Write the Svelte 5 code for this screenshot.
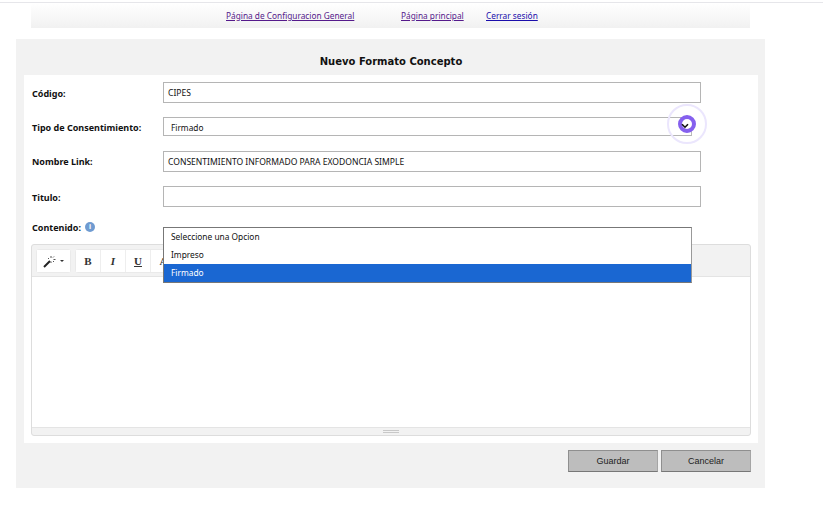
<script>
  const fields = [
    { label: 'Código:', value: 'CIPES' },
    { label: 'Tipo de Consentimiento:', value: 'Firmado', select: true },
    { label: 'Nombre Link:', value: 'CONSENTIMIENTO INFORMADO PARA EXODONCIA SIMPLE' },
    { label: 'Titulo:', value: '' }
  ];
  const options = ['Seleccione una Opcion', 'Impreso', 'Firmado'];
</script>

<div class="page">
  <nav class="topbar">
    <a class="visited first" href="#a">Página de Configuracion General</a>
    <a class="visited second" href="#b">Página principal</a>
    <a class="third" href="#c">Cerrar sesión</a>
  </nav>

  <main class="panel">
    <h1>Nuevo Formato Concepto</h1>
    <div class="inner">
      {#each fields as f}
        <div class="row">
          <span class="label">{f.label}</span>
          {#if f.select}
            <div class="box select">
              <span class="selval">{f.value}</span>
              <svg class="chev" width="8" height="6" viewBox="0 0 8 6"><path d="M1 1.2 L4 4.2 L7 1.2" fill="none" stroke="#111" stroke-width="1.6"/></svg>
              <span class="ring"></span>
            </div>
          {:else}
            <div class="box">{f.value}</div>
          {/if}
        </div>
      {/each}

      <div class="contentlabel">
        <span class="label auto">Contenido:</span>
        <span class="info">i</span>
      </div>

      <div class="editor">
        <div class="toolbar">
          <div class="group">
            <button class="tb wand">
              <svg width="13" height="13" viewBox="0 0 13 13"><path d="M1 12 L7 6" stroke="#222" stroke-width="2"/><path d="M8 1v2M8 6.5v1.5M10.5 4.500h2M5 3l1 1M11 1.500l-1 1M11 7l-1-1" stroke="#555" stroke-width="1"/></svg>
              <i class="caret"></i>
            </button>
          </div>
          <div class="group">
            <button class="tb bold">B</button>
            <button class="tb ital">I</button>
            <button class="tb under">U</button>
            <button class="tb">A</button>
          </div>
        </div>
        <div class="area"></div>
        <div class="resize"><span></span></div>
      </div>

      <ul class="dropdown">
        {#each options as o, i}
          <li class:active={i === 2}>{o}</li>
        {/each}
      </ul>
    </div>
    <div class="actions">
      <button class="btn">Guardar</button>
      <button class="btn">Cancelar</button>
    </div>
  </main>
</div>

<style>
  :global(body) { margin: 0; background: #fff; }
  .page {
    width: 823px; box-sizing: border-box; overflow: hidden;
    border-top: 1px solid #e6e6ea; margin-top: 2px; height: 530px;
    font-family: "Noto Sans", Tahoma, sans-serif; font-size: 9px; color: #111;
  }
  .topbar {
    margin-left: 31px; width: 719px; height: 25px;
    background: linear-gradient(#fff, #f1f1f1);
    display: flex; align-items: center; font-size: 8.3px; box-sizing: border-box;
  }
  .topbar a { color: #1a0dab; text-decoration: underline; white-space: nowrap; }
  .topbar .visited { color: #551a8b; }
  .first { margin-left: 195px; width: 175px; }
  .second { width: 85px; }
  .third { width: 60px; }
  .panel {
    margin: 11px 0 0 16px; width: 749px; height: 449px; background: #f2f2f2;
    padding: 0 7px 0 8px; box-sizing: border-box;
  }
  h1 {
    margin: 0; height: 36px; text-align: center;
    font: bold 10px/45px "DejaVu Sans", sans-serif; color: #111;
  }
  .inner { background: #fff; height: 368px; position: relative; padding: 7px 8px 0 8px; box-sizing: border-box; }
  .row { display: flex; align-items: center; height: 21px; margin-bottom: 14px; }
  .row:nth-child(2) { height: 19px; margin-bottom: 15px; }
  .label { width: 131px; font-weight: bold; color: #111; flex: none; padding-top: 1px; box-sizing: border-box; }
  .row:nth-child(3) .label { padding-top: 0; }
  .label.auto { width: auto; }
  .box {
    width: 538px; height: 100%; box-sizing: border-box; border: 1px solid #b5b5b5;
    padding: 1px 4px 0; display: flex; align-items: center; font-size: 8.55px; white-space: nowrap; background: #fff;
  }
  .select { width: 529px; position: relative; padding-left: 7px; border-right: 1px solid #bbb; font-size: 8.3px; }
  .chev { position: absolute; right: 2px; top: 5px; z-index: 1; }
  .ring {
    position: absolute; right: -5px; top: -3px; width: 18px; height: 18px; box-sizing: border-box;
    border: 4px solid #8560ee; border-radius: 50%; background: #fff;
    outline: 2px solid #ebe6fd; outline-offset: 9px;
  }
  .contentlabel { display: flex; align-items: center; gap: 4px; margin-top: -1px; height: 14px; }
  .info {
    width: 10px; height: 10px; border-radius: 50%; background: #6f9bd1; color: #fff;
    font-size: 7px; font-weight: bold; text-align: center; line-height: 10px;
  }
  .editor {
    margin: 10px 0 0 -1px; width: 720px; height: 192px; box-sizing: border-box;
    border: 1px solid #ddd; border-radius: 3px; background: #f2f2f2; display: flex; flex-direction: column;
  }
  .toolbar { height: 31px; flex: none; padding: 4px 5px 0 4px; box-sizing: border-box; display: flex; gap: 4px; }
  .group { display: flex; background: #fff; border: 1px solid #eaeaea; border-radius: 3px; height: 24px; box-sizing: border-box; }
  .tb {
    border: 0; border-right: 1px solid #eee; background: #fff; height: 22px; width: 25px; padding: 0;
    font: bold 11px "Liberation Serif", serif; color: #333; display: flex; align-items: center; justify-content: center;
  }
  .tb:last-child { border-right: 0; }
  .wand { width: 33px; gap: 4px; }
  .caret { width: 0; height: 0; border: 2.500px solid transparent; border-top-color: #333; border-bottom: 0; }
  .ital { font-style: italic; }
  .under { text-decoration: underline; }
  .area { flex: 1; background: #fff; border-top: 1px solid #e4e4e4; border-bottom: 1px solid #e4e4e4; }
  .resize { height: 7px; flex: none; display: flex; justify-content: center; align-items: center; }
  .resize span { width: 16px; height: 3px; border-top: 1px solid #c8c8c8; border-bottom: 1px solid #c8c8c8; box-sizing: border-box; }
  .dropdown {
    position: absolute; left: 139px; top: 152px; width: 529px; margin: 0; padding: 0; list-style: none;
    background: #fff; border: 1px solid #777; border-right-color: #999; box-sizing: border-box;
  }
  .dropdown li { height: 18px; line-height: 18px; padding-left: 7px; font-size: 8.35px; color: #111; }
  .dropdown li.active { background: #1a67d2; color: #fff; }
  .actions { display: flex; justify-content: flex-end; gap: 3px; padding: 7px 7px 0 0; }
  .btn {
    width: 90px; height: 22px; background: #bdbdbd; border: 1px solid #8f8f8f; padding: 0;
    font: 9px "Liberation Sans", sans-serif; color: #222; border-right-color: #a5a5a5; border-bottom-color: #777;
  }
</style>
